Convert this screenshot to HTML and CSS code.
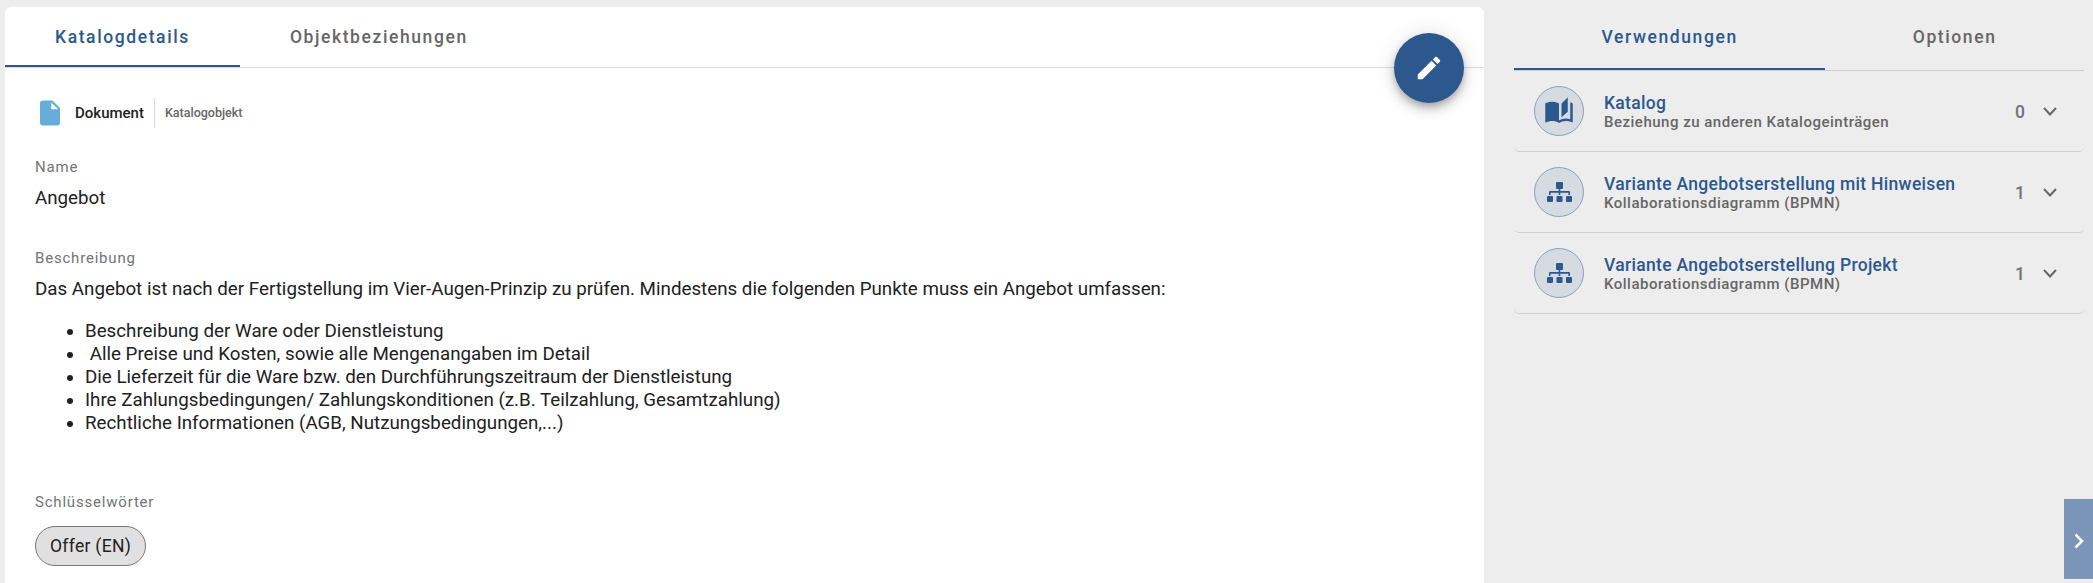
FILE: index.html
```html
<!DOCTYPE html>
<html lang="de">
<head>
    <meta charset="UTF-8">
    <meta name="viewport" content="width=device-width, initial-scale=1.0">
    <title>Katalogdetails</title>
    <link rel="stylesheet" href="styles.css">
</head>
<body>

<div class="page">
    <main class="card">
        <div class="tabs">
            <div class="tab active">Katalogdetails</div>
            <div class="tab">Objektbeziehungen</div>
        </div>

        <button class="edit-button">
            <svg viewBox="0 0 24 24" width="30" height="30"><path fill="currentColor" d="M3 17.25V21h3.75L17.81 9.94l-3.75-3.75L3 17.25zM20.71 7.04c.39-.39.39-1.02 0-1.41l-2.34-2.34c-.39-.39-1.02-.39-1.41 0l-1.83 1.83 3.75 3.75 1.83-1.83z"/></svg>
        </button>

        <div class="content">
            <div class="type">
                <svg class="type-icon" viewBox="0 0 24 24"><path fill="currentColor" d="M6 2c-1.1 0-1.99.9-1.99 2L4 20c0 1.100.89 2 1.990 2H18c1.100 0 2-.9 2-2V8l-6-6H6zm7 7V3.500L18.500 9H13z"/></svg>
                <span class="type-name">Dokument</span>
                <span class="type-kind">Katalogobjekt</span>
            </div>

            <div class="label">Name</div>
            <div class="value name">Angebot</div>

            <div class="label">Beschreibung</div>
            <div class="value">Das Angebot ist nach der Fertigstellung im Vier-Augen-Prinzip zu prüfen. Mindestens die folgenden Punkte muss ein Angebot umfassen:</div>
            <ul class="points">
                <li>Beschreibung der Ware oder Dienstleistung</li>
                <li>&nbsp;Alle Preise und Kosten, sowie alle Mengenangaben im Detail</li>
                <li>Die Lieferzeit für die Ware bzw. den Durchführungszeitraum der Dienstleistung</li>
                <li>Ihre Zahlungsbedingungen/ Zahlungskonditionen (z.B. Teilzahlung, Gesamtzahlung)</li>
                <li>Rechtliche Informationen (AGB, Nutzungsbedingungen,...)</li>
            </ul>

            <div class="label">Schlüsselwörter</div>
            <span class="chip">Offer (EN)</span>
        </div>
    </main>

    <aside class="sidebar">
        <div class="tabs">
            <div class="tab active">Verwendungen</div>
            <div class="tab">Optionen</div>
        </div>

        <div class="row">
            <div class="circle">
                <svg viewBox="0 0 24 24" width="30" height="30"><path fill="currentColor" d="M19 1l-5 5v11l5-4.500V1zM1 6v14.650c0 .25.25.5.5.5.1 0 .15-.05.25-.05C3.100 20.450 5.050 20 6.500 20c1.950 0 4.050.4 5.500 1.500V6c-1.450-1.100-3.550-1.500-5.500-1.500S2.450 4.900 1 6zm22 13.500V6c-.6-.45-1.250-.75-2-1v13.500c-1.100-.35-2.300-.5-3.500-.5-1.700 0-4.150.65-5.500 1.500v2c1.350-.85 3.800-1.500 5.500-1.500 1.650 0 3.350.3 4.750 1.050.1.050.15.050.25.050.25 0 .5-.25.5-.5v-1.100z"/></svg>
            </div>
            <div class="text">
                <div class="title">Katalog</div>
                <div class="subtitle">Beziehung zu anderen Katalogeinträgen</div>
            </div>
            <div class="count">0</div>
            <svg class="chevron" viewBox="0 0 14 9"><path d="M1 1l6 6.500L13 1"/></svg>
        </div>

        <div class="row">
            <div class="circle">
                <svg viewBox="0 0 25 20" width="25" height="20"><path fill="currentColor" d="M10 0h5q1 0 1 1v5q0 1-1 1h-1.700v2H22q1 0 1 1v3h-1.600v-2.300h-8.100V13h-1.600v-2.300H3.600V13H2v-3q0-1 1-1h8.700V7H10q-1 0-1-1V1q0-1 1-1zM1 14h4q1 0 1 1v4q0 1-1 1H1q-1 0-1-1v-4q0-1 1-1zM10.500 14h4q1 0 1 1v4q0 1-1 1h-4q-1 0-1-1v-4q0-1 1-1zM20 14h4q1 0 1 1v4q0 1-1 1h-4q-1 0-1-1v-4q0-1 1-1z"/></svg>
            </div>
            <div class="text">
                <div class="title">Variante Angebotserstellung mit Hinweisen</div>
                <div class="subtitle">Kollaborationsdiagramm (BPMN)</div>
            </div>
            <div class="count">1</div>
            <svg class="chevron" viewBox="0 0 14 9"><path d="M1 1l6 6.500L13 1"/></svg>
        </div>

        <div class="row">
            <div class="circle">
                <svg viewBox="0 0 25 20" width="25" height="20"><path fill="currentColor" d="M10 0h5q1 0 1 1v5q0 1-1 1h-1.700v2H22q1 0 1 1v3h-1.600v-2.300h-8.100V13h-1.600v-2.300H3.600V13H2v-3q0-1 1-1h8.700V7H10q-1 0-1-1V1q0-1 1-1zM1 14h4q1 0 1 1v4q0 1-1 1H1q-1 0-1-1v-4q0-1 1-1zM10.500 14h4q1 0 1 1v4q0 1-1 1h-4q-1 0-1-1v-4q0-1 1-1zM20 14h4q1 0 1 1v4q0 1-1 1h-4q-1 0-1-1v-4q0-1 1-1z"/></svg>
            </div>
            <div class="text">
                <div class="title">Variante Angebotserstellung Projekt</div>
                <div class="subtitle">Kollaborationsdiagramm (BPMN)</div>
            </div>
            <div class="count">1</div>
            <svg class="chevron" viewBox="0 0 14 9"><path d="M1 1l6 6.500L13 1"/></svg>
        </div>
    </aside>
</div>

<button class="handle">
    <svg viewBox="0 0 10 16" width="10" height="16"><path d="M1.500 1.500L8 8l-6.500 6.500"/></svg>
</button>

</body>
</html>
```
FILE: styles.css
```css
* {
    box-sizing: border-box;
}
body {
    margin: 0;
    background-color: #ededed;
    color: #212121;
    font-family: Roboto, sans-serif;
    overflow: hidden;
}
.page {
    display: flex;
    height: 583px;
    padding: 7px 9px 0 5px;
    gap: 30px;
}
.card {
    position: relative;
    width: 1479px;
    background-color: white;
    border-radius: 6px 6px 0 0;
}
.tabs {
    display: flex;
    height: 61px;
    border-bottom: 1px solid #dcdcdc;
}
.tab {
    display: flex;
    justify-content: center;
    padding: 19px 50px 0;
    color: #666;
    font-size: 17.5px;
    font-weight: 500;
    line-height: 22px;
    letter-spacing: 1.6px;
    border-bottom: 2px solid transparent;
}
.tab.active {
    color: #2c588e;
    border-bottom-color: #2c588e;
}
.edit-button {
    position: absolute;
    top: 26px;
    right: 20px;
    display: flex;
    align-items: center;
    justify-content: center;
    width: 70px;
    height: 70px;
    padding: 0;
    border: none;
    border-radius: 50%;
    background-color: #2c588e;
    color: white;
    box-shadow: 0 4px 6px -1px rgba(0, 0, 0, 0.2), 0 7px 12px rgba(0, 0, 0, 0.14), 0 1px 22px rgba(0, 0, 0, 0.12);
}
.content {
    padding: 30px;
}
.type {
    display: flex;
    align-items: center;
    height: 30px;
    margin-bottom: 29px;
}
.type-icon {
    width: 30px;
    height: 30px;
    color: #66aed9;
}
.type-name {
    margin: 0 10px;
    font-size: 15px;
    font-weight: 500;
}
.type-kind {
    padding-left: 10px;
    border-left: 1px solid #dcdcdc;
    color: #666;
    font-size: 12.5px;
    font-weight: 500;
    line-height: 30px;
}
.label {
    color: #737373;
    font-size: 15px;
    line-height: 20px;
    letter-spacing: 0.8px;
}
.value {
    margin-top: 10px;
    font-size: 18.75px;
    line-height: 23px;
}
.name {
    margin-bottom: 38px;
}
.points {
    margin: 19px 0 57px;
    padding-left: 50px;
    font-size: 18.75px;
    line-height: 23px;
}
.chip {
    display: inline-block;
    height: 40px;
    margin-top: 14px;
    padding: 0 14px;
    border: 1px solid #777;
    border-radius: 20px;
    background-color: #e0e0e0;
    font-size: 17.5px;
    line-height: 38px;
    letter-spacing: 0.3px;
}
.sidebar {
    flex: 1;
}
.sidebar .tabs {
    height: 64px;
    border-bottom-color: #d0d0d0;
}
.sidebar .tab {
    flex: 1 1 auto;
}
.row {
    display: flex;
    align-items: center;
    height: 81px;
    padding: 0 27px 0 20px;
    border-bottom: 1px solid #d0d0d0;
    border-radius: 5px;
}
.circle {
    display: flex;
    align-items: center;
    justify-content: center;
    width: 50px;
    height: 50px;
    margin-right: 20px;
    border: 1px solid #89a1c0;
    border-radius: 50%;
    background-color: #d6dbe2;
    color: #2c588e;
}
.text {
    flex: 1;
    padding-top: 2px;
}
.title {
    color: #2c588e;
    font-size: 17.5px;
    font-weight: 500;
    line-height: 20px;
    letter-spacing: 0.31px;
}
.subtitle {
    color: #666;
    font-size: 15px;
    font-weight: 500;
    line-height: 18px;
    letter-spacing: 0.5px;
}
.count {
    margin-right: 18px;
    padding-top: 1px;
    color: #737373;
    font-size: 17.5px;
    font-weight: 500;
}
.chevron {
    width: 14px;
    height: 9px;
    fill: none;
    stroke: #666;
    stroke-width: 2;
}
.handle {
    position: fixed;
    right: 0;
    bottom: 4px;
    display: flex;
    align-items: center;
    justify-content: center;
    width: 29px;
    height: 80px;
    padding: 4px 0 0;
    border: none;
    background-color: #7b95b8;
}
.handle svg {
    fill: none;
    stroke: white;
    stroke-width: 2.5;
}
```
